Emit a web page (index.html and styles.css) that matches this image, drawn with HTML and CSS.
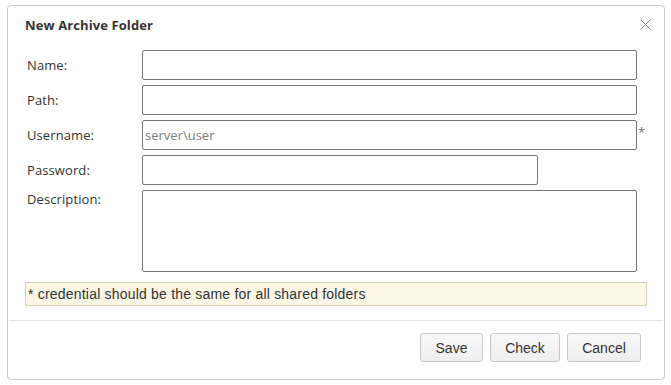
FILE: index.html
```html
<!DOCTYPE html>
<html>
<head>
<meta charset="utf-8">
<link rel="stylesheet" href="styles.css">
</head>
<body>
<div class="dialog">
  <div class="header">
    <span class="title">New Archive Folder</span>
    <svg class="close" width="11" height="11" viewBox="0 0 11 11"><path d="M0.5 0.5L10.5 10.5M10.5 0.5L0.5 10.5" stroke="#8a8a8a" stroke-width="1" fill="none"/></svg>
  </div>
  <div class="body">
    <div class="form">
      <label class="lbl">Name:</label>
      <div class="field"><input class="inp" type="text"></div>
      <label class="lbl">Path:</label>
      <div class="field"><input class="inp" type="text"></div>
      <label class="lbl">Username:</label>
      <div class="field"><input class="inp" type="text" placeholder="server\user"><span class="star">*</span></div>
      <label class="lbl">Password:</label>
      <div class="field"><input class="inp short" type="password"></div>
      <label class="lbl top">Description:</label>
      <div class="field"><textarea class="inp area"></textarea></div>
    </div>
    <div class="note">* credential should be the same for all shared folders</div>
  </div>
  <div class="sep"></div>
  <div class="footer">
    <button class="btn btn-save">Save</button>
    <button class="btn btn-check">Check</button>
    <button class="btn btn-cancel">Cancel</button>
  </div>
</div>
</body>
</html>
```

FILE: styles.css
```css
html, body {
  margin: 0;
  padding: 0;
  background: #ffffff;
}
body {
  font-family: "Open Sans", "Noto Sans", sans-serif;
  color: #333333;
}
.dialog {
  margin: 5px 0 0 7px;
  width: 658px;
  height: 375px;
  box-sizing: border-box;
  border: 1px solid #c9c9c9;
  border-radius: 4px;
  display: flex;
  flex-direction: column;
  background: #fff;
}
.header {
  height: 38px;
  padding: 0 13px 0 17px;
  display: flex;
  align-items: center;
  justify-content: space-between;
}
.title {
  font-size: 13px;
  font-weight: bold;
  color: #333;
  letter-spacing: 0.1px;
}
.close {
  display: block;
  margin-top: -2px;
}
.body {
  padding: 6px 0 0 17px;
}
.form {
  display: grid;
  grid-template-columns: 115px 517px;
  row-gap: 5px;
  padding-left: 2px;
}
.lbl {
  font-size: 13px;
  color: #333;
  display: flex;
  align-items: center;
  height: 30px;
  letter-spacing: 0.1px;
}
.lbl.top {
  align-items: flex-start;
  height: auto;
  padding-top: 0;
  line-height: 18px;
}
.field {
  display: flex;
  align-items: flex-start;
}
.inp {
  box-sizing: border-box;
  width: 495px;
  height: 30px;
  border: 1px solid #767676;
  border-radius: 2px;
  padding: 0 2px;
  margin: 0;
  font-family: "Open Sans", sans-serif;
  font-size: 13px;
  color: #333;
  background: #fff;
  outline: none;
}
.inp::placeholder {
  color: #808080;
}
.inp.short {
  width: 396px;
}
.inp.area {
  height: 82px;
  resize: none;
  display: block;
}
.star {
  font-size: 13px;
  color: #777;
  margin-left: 1px;
  line-height: 24px;
}
.note {
  margin-top: 10px;
  width: 622px;
  height: 24px;
  box-sizing: border-box;
  border: 1px solid #d6d0b8;
  background: #fcf7e4;
  font-family: "Liberation Sans", Arial, sans-serif;
  font-size: 14px;
  letter-spacing: 0.2px;
  color: #333;
  padding: 0 0 0 2px;
  line-height: 22px;
}
.sep {
  margin: 14px 1px 0 1px;
  height: 1px;
  background: #e3e3e3;
}
.footer {
  display: flex;
  justify-content: flex-end;
  gap: 7px;
  padding: 12px 23px 0 0;
}
.btn {
  height: 29px;
  padding: 0;
  border: 1px solid #c8c8c8;
  border-radius: 3px;
  background: linear-gradient(#f8f8f8, #efefef);
  font-family: "Liberation Sans", Arial, sans-serif;
  font-size: 14px;
  color: #333;
  text-align: center;
}
.btn-save { width: 63px; }
.btn-check { width: 70px; }
.btn-cancel { width: 74px; }
```
